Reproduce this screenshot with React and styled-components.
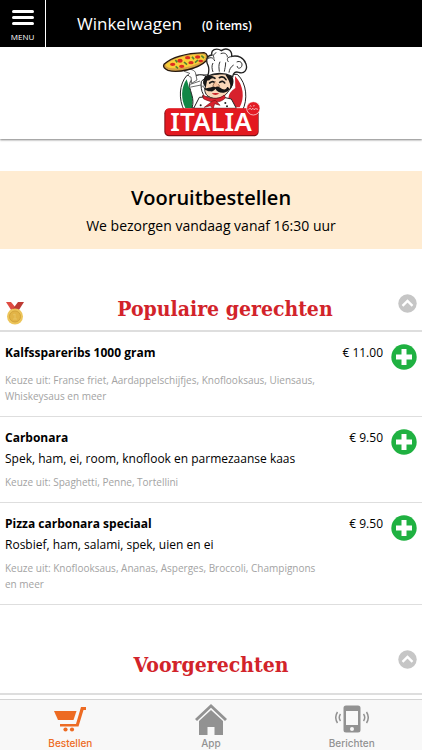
import styled, { createGlobalStyle } from "styled-components";

const Colors = {
  Black: "#000",
  White: "#fff",
  Red: "#d2232a",
  Green: "#1fb141",
  Orange: "#ed6b23",
  Grey: "#929292",
  LightGrey: "#a3a3a3",
  Line: "#dedede",
  Cream: "#ffecd2",
};

const GlobalStyle = createGlobalStyle`
  * {
    box-sizing: border-box;
  }
  body {
    margin: 0;
    background: ${Colors.White};
    color: ${Colors.Black};
    font-family: "Open Sans", "Noto Sans", sans-serif;
  }
  h1, h2, h3, p, ul {
    margin: 0;
    padding: 0;
  }
  button {
    border: 0;
    padding: 0;
    background: none;
    color: inherit;
    font: inherit;
    cursor: pointer;
  }
`;

const Page = styled.div`
  display: flex;
  flex-direction: column;
  height: 100vh;
`;

const Header = styled.header`
  display: flex;
  flex-shrink: 0;
  height: 47px;
  background: ${Colors.Black};
  color: ${Colors.White};
`;

const MenuButton = styled.button`
  display: flex;
  flex-direction: column;
  align-items: center;
  gap: 4px;
  width: 46px;
  padding-top: 10px;
  border-right: 1px solid ${Colors.White};
  font-size: 8px;
  line-height: 14px;
`;

const CartLink = styled.a`
  display: flex;
  align-items: baseline;
  gap: 20px;
  padding: 12px 0 0 31px;
  color: ${Colors.White};
  font-size: 17px;
  font-weight: 500;
  line-height: 24px;
  text-decoration: none;
`;

const CartCount = styled.span`
  font-size: 12px;
  font-weight: 600;
`;

const Content = styled.main`
  flex: 1;
  min-height: 0;
  overflow-y: auto;
  scrollbar-width: none;
`;

const LogoBar = styled.div`
  display: flex;
  justify-content: center;
  height: 92px;
  padding-top: 1px;
  box-shadow: 0 1px 2px rgba(0, 0, 0, 0.5);
`;

const Banner = styled.section`
  margin-top: 32px;
  padding: 12px 16px 10px;
  background: ${Colors.Cream};
  text-align: center;
`;

const BannerTitle = styled.h1`
  font-size: 20px;
  font-weight: 600;
  line-height: 30px;
`;

const BannerText = styled.p`
  font-size: 14px;
  line-height: 26px;
`;

const CategoryHeader = styled.div`
  display: grid;
  grid-template-columns: ${(props) => (props.$hasIcon ? "48px" : "20px")} 1fr 20px;
  align-items: start;
  height: ${(props) => (props.$hasIcon ? "43px" : "50px")};
  margin-top: 40px;
  padding: 0 5px;
  border-bottom: 2px solid ${Colors.Line};

  > svg {
    margin-top: 12px;
  }
`;

const CategoryTitle = styled.h2`
  grid-column: 2;
  padding-top: 6px;
  color: ${Colors.Red};
  font-family: "DejaVu Serif Condensed", "DejaVu Serif", serif;
  font-size: 21px;
  font-stretch: condensed;
  font-weight: 700;
  line-height: 28px;
  text-align: center;
`;

const CollapseButton = styled.button`
  display: flex;
  justify-content: center;
  padding-top: 5px;
`;

const DishList = styled.ul`
  list-style: none;
`;

const DishRow = styled.li`
  display: flex;
  padding: 12px 5px;
  border-bottom: 1px solid ${Colors.Line};
`;

const DishInfo = styled.div`
  flex: 1;
  min-width: 0;
  font-size: 12px;
`;

const DishName = styled.h3`
  font-size: 12px;
  font-weight: 700;
  line-height: 18px;
`;

const DishText = styled.p`
  margin-top: 2px;
  line-height: 20px;
`;

const DishOptions = styled.p`
  margin-top: ${(props) => (props.$spaced ? "10px" : "5px")};
  color: ${Colors.LightGrey};
  font-size: 10px;
  line-height: 16px;
`;

const Price = styled.span`
  width: 60px;
  font-size: 12px;
  line-height: 18px;
  text-align: right;
`;

const AddButton = styled.button`
  display: flex;
  align-self: flex-start;
  margin-left: 8px;
`;

const TabBar = styled.nav`
  display: flex;
  flex-shrink: 0;
  height: 51px;
  border-top: 1px solid #d4d4d4;
  background: #f8f8f8;
`;

const Tab = styled.a`
  display: flex;
  flex: 1;
  flex-direction: column;
  align-items: center;
  padding-top: 2px;
  color: ${(props) => (props.$active ? Colors.Orange : Colors.Grey)};
  font-family: Inter, sans-serif;
  font-size: 10px;
  font-weight: 500;
  line-height: 14px;
  text-decoration: none;

  svg {
    margin-bottom: 1px;
  }
`;

function MenuIcon() {
  return (
    <svg width="22" height="16" viewBox="0 0 22 16" fill={Colors.White} aria-hidden="true">
      <rect width="22" height="3" rx="1.5" />
      <rect y="6" width="22" height="3" rx="1.5" />
      <rect y="12" width="22" height="3" rx="1.5" />
    </svg>
  );
}

function Logo() {
  return (
    <svg width="99" height="89" viewBox="21 12 297 267" role="img" aria-label="Italia">
      {/* flag behind the chef */}
      <path d="M96 94C72 120 70 166 88 200H262C279 168 276 118 247 91Z" fill="#fff" stroke="#222" strokeWidth="3" />
      <path d="M95 106C77 132 78 166 91 192H113C110 170 124 146 102 130Z" fill="#128747" />
      <path d="M240 96C267 124 269 163 254 190H229C218 168 214 150 241 132Z" fill="#d7212d" />
      {/* raised arm and body */}
      <path d="M116 102C126 91 139 89 155 98L139 112C137 126 139 142 145 151L133 192H111C120 164 105 144 104 126C103 114 107 110 116 102Z" fill="#fff" stroke="#222" strokeWidth="3" />
      <path d="M88 82C98 74 115 74 121 85L126 108L110 118L108 99C99 98 98 91 104 88Z" fill="#fff" stroke="#222" strokeWidth="2" />
      <path d="M106 121L135 111M108 129L138 123" stroke="#222" strokeWidth="2" />
      <path d="M133 160L116 193H244L229 165L192 157Z" fill="#fff" stroke="#222" strokeWidth="3" />
      {/* pizza */}
      <path d="M27 61C50 40 91 28 147 26C157 28 161 40 154 50C129 75 68 88 39 79C28 75 23 68 27 61Z" fill="#d6a144" stroke="#26180c" strokeWidth="4" />
      <path d="M33 61C58 42 94 32 144 31C155 34 153 42 147 48C121 67 70 78 42 71C34 69 31 65 33 61Z" fill="#f8cf39" />
      <g fill="#dd2c22">
        <ellipse cx="53" cy="61" rx="8" ry="5" />
        <ellipse cx="75" cy="50" rx="8" ry="6" />
        <ellipse cx="80" cy="67" rx="8" ry="5" />
        <ellipse cx="98" cy="41" rx="8" ry="5" />
        <ellipse cx="108" cy="56" rx="8" ry="5" />
        <ellipse cx="128" cy="39" rx="8" ry="5" />
        <ellipse cx="137" cy="51" rx="7" ry="4" />
      </g>
      <path d="M61 48L67 55M87 54L96 62M111 38L117 46M120 56L129 48M62 67L69 73M139 35L147 42" stroke="#53842f" strokeWidth="5" />
      {/* hair, face and ear */}
      <path d="M151 96C143 107 146 123 156 133L173 97ZM221 91C235 103 238 121 226 137L212 104Z" fill="#151515" />
      <path d="M156 94L222 87C234 107 232 128 218 145C206 163 178 169 160 157C149 150 147 137 152 125C144 121 143 110 151 108Z" fill="#f9d8b9" stroke="#222" strokeWidth="3" />
      <path d="M154 96L176 95L156 111L152 131C142 118 143 104 154 96ZM211 92L226 91C239 103 238 122 227 134C228 122 222 109 211 92Z" fill="#171717" />
      {/* chef's hat */}
      <path d="M158 96C163 81 163 73 159 64C150 48 158 33 171 33C166 18 184 10 199 20C213 10 232 16 230 37C251 33 267 42 272 58C280 76 268 91 251 85C241 82 235 86 233 98C207 85 180 86 158 96Z" fill="#fff" stroke="#222" strokeWidth="4" />
      <path d="M158 44C168 38 177 42 179 51M184 26C174 30 174 38 178 43M197 29C209 24 218 31 217 40M230 38C216 38 214 48 221 54M245 54C256 49 264 57 260 67C256 76 245 73 247 66M174 57C169 65 171 76 174 84M195 53C190 63 192 72 193 83M212 55C212 66 209 76 208 83M236 63C227 68 223 77 222 86" fill="none" stroke="#333" strokeWidth="3" />
      {/* eyes, nose and moustache */}
      <path d="M161 107Q171 96 180 103M193 101Q205 94 213 107M164 117Q174 109 180 117M194 115Q204 108 209 117" fill="none" stroke="#191919" strokeWidth="5" strokeLinecap="round" />
      <path d="M181 112C174 123 170 129 180 132C190 135 197 126 190 121" fill="#f6c49e" stroke="#603b25" strokeWidth="2" />
      <path d="M181 130C172 125 164 135 149 132C143 132 140 126 145 124C145 136 155 143 166 142C174 143 179 138 181 134C187 146 205 151 219 141C225 136 222 129 216 129C215 139 202 137 197 132C191 127 186 126 181 130Z" fill="#171717" />
      <path d="M170 148Q181 158 193 148Q183 146 170 148Z" fill="#c92026" />
      {/* scarf */}
      <path d="M144 153C164 166 190 168 208 153L211 162C195 178 172 178 145 164Z" fill="#da202c" stroke="#771015" strokeWidth="2" />
      <path d="M173 171L148 190L166 185L174 195L179 179L195 184L181 169Z" fill="#da202c" stroke="#771015" strokeWidth="2" />
      <g fill="#222">
        <circle cx="137" cy="184" r="3" />
        <circle cx="211" cy="177" r="3" />
        <circle cx="216" cy="187" r="3" />
      </g>
      {/* name plate */}
      <rect x="28" y="194" width="283" height="83" rx="14" fill="#7f1016" />
      <rect x="31" y="193" width="278" height="80" rx="12" fill="#e31920" />
      <text x="168" y="261" textAnchor="middle" fill="#fff" fontFamily="Noto Sans, sans-serif" fontSize="78" fontWeight="600">ITALIA</text>
      <circle cx="295" cy="193" r="20" fill="#e31c25" stroke="#fff" strokeWidth="2" />
      <path d="M284 187L287 185L289 188M294 186L299 185M280 196L286 193L289 197L294 193L297 197L302 194L309 196" fill="none" stroke="#fff" strokeWidth="2" />
    </svg>
  );
}

function MedalIcon() {
  return (
    <svg width="20" height="24" viewBox="0 0 20 24" aria-hidden="true">
      <path d="M1 1H6L11 7L8 12Z" fill="#df4c42" />
      <path d="M13 1H19L12 12L7 9Z" fill="#bd3b34" />
      <circle cx="10" cy="15.5" r="8" fill="#edc55a" />
      <circle cx="10" cy="15.5" r="5.5" fill="#e2b447" stroke="#d3a43c" />
      <path d="M8 14L10 13V18M8 18H12" fill="none" stroke="#e9c462" />
    </svg>
  );
}

function ChevronIcon() {
  return (
    <svg width="19" height="19" viewBox="0 0 19 19" aria-hidden="true">
      <circle cx="9.5" cy="9.5" r="9.2" fill="#c6c6c6" />
      <path d="M4.5 11.8L9.5 7L14.5 11.8" fill="none" stroke="#fff" strokeWidth="2.4" />
    </svg>
  );
}

function PlusIcon() {
  return (
    <svg width="26" height="26" viewBox="0 0 26 26" aria-hidden="true">
      <circle cx="13" cy="13" r="12.7" fill={Colors.Green} />
      <path d="M13 5V21M5 13H21" stroke="#fff" strokeWidth="5" />
    </svg>
  );
}

function CartIcon() {
  return (
    <svg width="34" height="33" viewBox="0 0 34 33" fill="currentColor" aria-hidden="true">
      <path d="M1 9H23.5L20.5 18H5Z" />
      <path d="M7 22V24.5H25.5L30.5 8H33V5H28L23 22Z" />
      <circle cx="12.5" cy="27.5" r="2.1" />
      <circle cx="19" cy="27.5" r="2.1" />
    </svg>
  );
}

function HomeIcon() {
  return (
    <svg width="34" height="33" viewBox="0 0 34 33" fill="currentColor" aria-hidden="true">
      <path d="M17 2L33 17L31 19L17 5.8L3 19L1 17Z" />
      <path d="M17 8L29 19V33H20.5V25H13.5V33H5V19Z" />
    </svg>
  );
}

function PhoneIcon() {
  return (
    <svg width="34" height="33" viewBox="0 0 34 33" aria-hidden="true">
      <path fill="currentColor" fillRule="evenodd" d="M11 3.5H23Q25.5 3.5 25.5 6V28Q25.5 30.5 23 30.5H11Q8.5 30.5 8.5 28V6Q8.5 3.5 11 3.5ZM11 9V23H23V9ZM17 25A2 2 0 1 0 17 29A2 2 0 1 0 17 25Z" />
      <path d="M5.5 12Q3 15.5 5.5 19M2.5 10Q-1 15.5 2.5 21M28.5 12Q31 15.5 28.5 19M31.5 10Q35 15.5 31.5 21" fill="none" stroke="currentColor" strokeWidth="1.5" />
    </svg>
  );
}

const dishes = [
  {
    name: "Kalfsspareribs 1000 gram",
    options: "Franse friet, Aardappelschijfjes, Knoflooksaus, Uiensaus, Whiskeysaus en meer",
    price: "11.00",
  },
  {
    name: "Carbonara",
    text: "Spek, ham, ei, room, knoflook en parmezaanse kaas",
    options: "Spaghetti, Penne, Tortellini",
    price: "9.50",
  },
  {
    name: "Pizza carbonara speciaal",
    text: "Rosbief, ham, salami, spek, uien en ei",
    options: "Knoflooksaus, Ananas, Asperges, Broccoli, Champignons en meer",
    price: "9.50",
  },
];

function Category({ title, icon }) {
  return (
    <CategoryHeader $hasIcon={Boolean(icon)}>
      {icon}
      <CategoryTitle>{title}</CategoryTitle>
      <CollapseButton aria-label={`${title} inklappen`}>
        <ChevronIcon />
      </CollapseButton>
    </CategoryHeader>
  );
}

function Dish({ name, text, options, price }) {
  return (
    <DishRow>
      <DishInfo>
        <DishName>{name}</DishName>
        {text && <DishText>{text}</DishText>}
        <DishOptions $spaced={!text}>{`Keuze uit: ${options}`}</DishOptions>
      </DishInfo>
      <Price>{`€ ${price}`}</Price>
      <AddButton aria-label={`${name} toevoegen`}>
        <PlusIcon />
      </AddButton>
    </DishRow>
  );
}

export default function App() {
  return (
    <Page>
      <GlobalStyle />
      <Header>
        <MenuButton>
          <MenuIcon />
          MENU
        </MenuButton>
        <CartLink href="#winkelwagen">
          Winkelwagen <CartCount>(0 items)</CartCount>
        </CartLink>
      </Header>
      <Content>
        <LogoBar>
          <Logo />
        </LogoBar>
        <Banner>
          <BannerTitle>Vooruitbestellen</BannerTitle>
          <BannerText>We bezorgen vandaag vanaf 16:30 uur</BannerText>
        </Banner>
        <Category title="Populaire gerechten" icon={<MedalIcon />} />
        <DishList>
          {dishes.map((dish) => (
            <Dish key={dish.name} {...dish} />
          ))}
        </DishList>
        <Category title="Voorgerechten" />
      </Content>
      <TabBar>
        <Tab href="#bestellen" $active>
          <CartIcon />
          Bestellen
        </Tab>
        <Tab href="#app">
          <HomeIcon />
          App
        </Tab>
        <Tab href="#berichten">
          <PhoneIcon />
          Berichten
        </Tab>
      </TabBar>
    </Page>
  );
}
